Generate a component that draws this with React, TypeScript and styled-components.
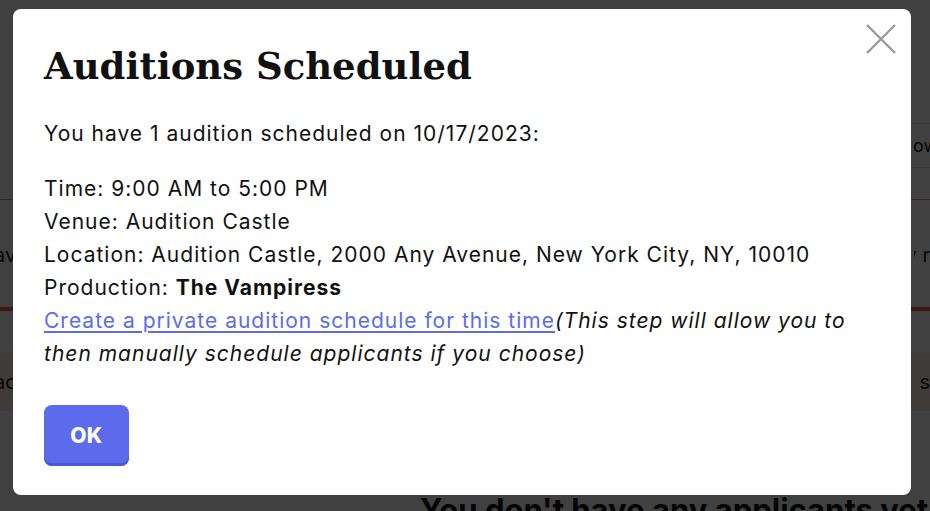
import styled, { createGlobalStyle } from 'styled-components';

const GlobalStyle = createGlobalStyle`
  * { box-sizing: border-box; }
  html, body { margin: 0; padding: 0; }
  body {
    width: 930px;
    height: 511px;
    overflow: hidden;
    font-family: Inter, 'Liberation Sans', sans-serif;
    background: #ffffff;
  }
`;

/* page behind the dialog */
const Page = styled.div`
  width: 930px;
  background: #ffffff;
  color: #111;
`;

const PageHeader = styled.div`
  height: 123px;
`;

const FilterRow = styled.div`
  height: 45px;
  margin-left: 900px;
  padding-left: 12px;
  border: 1px solid #e4e4e4;
  border-right: 0;
  display: flex;
  align-items: center;
  font-size: 18px;
  white-space: nowrap;
  overflow: hidden;
`;

const ThinRule = styled.div`
  margin-top: 31px;
  height: 1px;
  background: #c98a82;
`;

const TextRow = styled.div`
  margin-top: 43px;
  display: flex;
  justify-content: space-between;
  font-size: 20px;
  line-height: 24px;
  white-space: nowrap;
`;

const Clip = styled.span<{ $align: 'left' | 'right' }>`
  display: block;
  width: 16px;
  overflow: hidden;
  direction: ${(p) => (p.$align === 'right' ? 'rtl' : 'ltr')};
  text-indent: ${(p) => (p.$align === 'left' ? '-6px' : '0')};
`;

const ThickRule = styled.div`
  margin-top: 40px;
  height: 4px;
  background: #ec6a56;
`;

const Notice = styled.div`
  margin-top: 42px;
  height: 58px;
  background: #fbe9dd;
  display: flex;
  align-items: center;
  justify-content: space-between;
  font-size: 20px;
  white-space: nowrap;
`;

const EmptyTitle = styled.div`
  margin-top: 80px;
  padding-left: 420px;
  font-size: 31px;
  font-weight: 700;
  white-space: nowrap;
`;

/* dialog */
const Overlay = styled.div`
  position: fixed;
  inset: 0;
  background: rgba(0, 0, 0, 0.75);
  display: flex;
  align-items: flex-start;
  padding: 9px 0 0 13px;
`;

const Dialog = styled.div`
  position: relative;
  width: 898px;
  height: 486px;
  background: #ffffff;
  border-radius: 8px;
  padding: 33px 31px 29px 31px;
  display: flex;
  flex-direction: column;
  color: #111;
`;

const CloseButton = styled.button`
  position: absolute;
  top: 14px;
  right: 14px;
  width: 32px;
  height: 32px;
  padding: 0;
  border: 0;
  background: none;
  cursor: pointer;
`;

const Title = styled.h1`
  margin: 0 0 27px;
  font-family: 'DejaVu Serif', 'Liberation Serif', serif;
  font-size: 37px;
  font-weight: 700;
  line-height: 48px;
`;

const Body = styled.div`
  font-size: 21px;
  line-height: 33px;
  letter-spacing: 1px;
`;

const Paragraph = styled.p`
  margin: 0 0 22px;
`;

const InfoLine = styled.div``;

const Link = styled.a`
  color: #5b6cef;
  text-decoration: underline;
  text-underline-offset: 3px;
`;

const Hint = styled.em`
  font-style: italic;
`;

const Footer = styled.div`
  margin-top: auto;
`;

const OkButton = styled.button`
  width: 85px;
  height: 61px;
  border: 0;
  border-radius: 8px;
  background: #5b6beb;
  box-shadow: inset 0 -3px 0 #4a59d6;
  color: #fff;
  font-family: Inter, 'Liberation Sans', sans-serif;
  font-size: 21px;
  font-weight: 800;
  letter-spacing: 0.5px;
  cursor: pointer;
`;

export default function App() {
  return (
    <>
      <GlobalStyle />
      <Page>
        <PageHeader />
        <FilterRow>ow</FilterRow>
        <ThinRule />
        <TextRow>
          <Clip $align="left">av</Clip>
          <Clip $align="right">y r</Clip>
        </TextRow>
        <ThickRule />
        <Notice>
          <Clip $align="left">ac</Clip>
          <Clip $align="right">s "</Clip>
        </Notice>
        <EmptyTitle>You don't have any applicants yet</EmptyTitle>
      </Page>
      <Overlay>
        <Dialog role="dialog">
          <CloseButton aria-label="Close">
            <svg width="32" height="32" viewBox="0 0 32 32">
              <path d="M2 2 L30 30 M30 2 L2 30" stroke="#9a9a9a" strokeWidth="2.4" fill="none" />
            </svg>
          </CloseButton>
          <Title>Auditions Scheduled</Title>
          <Body>
            <Paragraph>You have 1 audition scheduled on 10/17/2023:</Paragraph>
            <InfoLine>Time: 9:00 AM to 5:00 PM</InfoLine>
            <InfoLine>Venue: Audition Castle</InfoLine>
            <InfoLine>Location: Audition Castle, 2000 Any Avenue, New York City, NY, 10010</InfoLine>
            <InfoLine>
              Production: <strong>The Vampiress</strong>
            </InfoLine>
            <InfoLine>
              <Link href="#">Create a private audition schedule for this time</Link>
              <Hint>(This step will allow you to then manually schedule applicants if you choose)</Hint>
            </InfoLine>
          </Body>
          <Footer>
            <OkButton>OK</OkButton>
          </Footer>
        </Dialog>
      </Overlay>
    </>
  );
}
